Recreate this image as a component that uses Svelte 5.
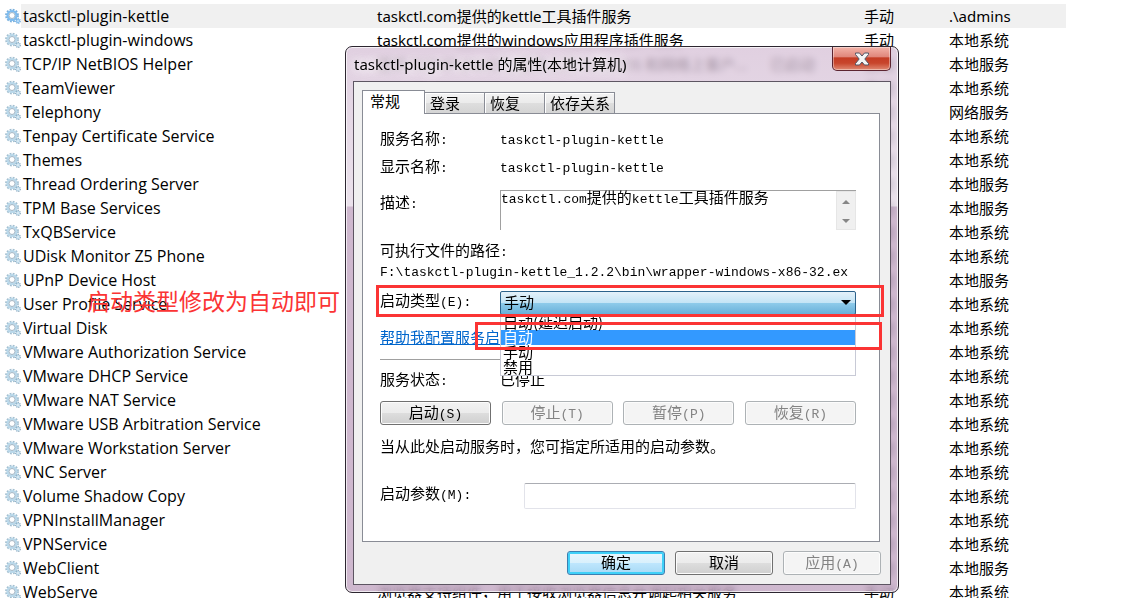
<script>
    const services = [
        { name: 'taskctl-plugin-kettle', desc: 'taskctl.com提供的kettle工具插件服务', start: '手动', login: '.\\admins' },
        { name: 'taskctl-plugin-windows', desc: 'taskctl.com提供的windows应用程序插件服务', start: '手动', login: '本地系统' },
        { name: 'TCP/IP NetBIOS Helper', desc: '提供 TCP/IP (NetBT) 服务上的 NetBIOS 和网络上客户...', status: '已启动', start: '自动', login: '本地服务' },
        { name: 'TeamViewer', start: '手动', login: '本地系统' },
        { name: 'Telephony', start: '手动', login: '网络服务' },
        { name: 'Tenpay Certificate Service', start: '自动', login: '本地系统' },
        { name: 'Themes', start: '自动', login: '本地系统' },
        { name: 'Thread Ordering Server', start: '手动', login: '本地服务' },
        { name: 'TPM Base Services', start: '手动', login: '本地服务' },
        { name: 'TxQBService', start: '自动', login: '本地系统' },
        { name: 'UDisk Monitor Z5 Phone', start: '自动', login: '本地系统' },
        { name: 'UPnP Device Host', start: '手动', login: '本地服务' },
        { name: 'User Profile Service', start: '自动', login: '本地系统' },
        { name: 'Virtual Disk', start: '手动', login: '本地系统' },
        { name: 'VMware Authorization Service', start: '自动', login: '本地系统' },
        { name: 'VMware DHCP Service', start: '自动', login: '本地系统' },
        { name: 'VMware NAT Service', start: '自动', login: '本地系统' },
        { name: 'VMware USB Arbitration Service', start: '自动', login: '本地系统' },
        { name: 'VMware Workstation Server', start: '自动', login: '本地系统' },
        { name: 'VNC Server', start: '自动', login: '本地系统' },
        { name: 'Volume Shadow Copy', start: '手动', login: '本地系统' },
        { name: 'VPNInstallManager', start: '自动', login: '本地系统' },
        { name: 'VPNService', start: '手动', login: '本地系统' },
        { name: 'WebClient', start: '手动', login: '本地服务' },
        { name: 'WebServe', desc: '浏览器支持组件，用于接收浏览器信息并调起相关服务', start: '手动', login: '本地系统' }
    ];

    const tabs = ['常规', '登录', '恢复', '依存关系'];
    const startTypes = ['自动(延迟启动)', '自动', '手动', '禁用'];
    const actions = [
        { label: '启动', key: 'S', enabled: true },
        { label: '停止', key: 'T', enabled: false },
        { label: '暂停', key: 'P', enabled: false },
        { label: '恢复', key: 'R', enabled: false }
    ];

    let startType = '手动';
    let hovered = '自动';
</script>

<div class="screen">
    <table class="services">
        <colgroup>
            <col class="c-name" />
            <col class="c-desc" />
            <col class="c-status" />
            <col class="c-start" />
            <col />
        </colgroup>
        <tbody>
            {#each services as s, i}
                <tr class:selected={i === 0}>
                    <td class="name">
                        <svg class="gear" viewBox="0 0 16 16" aria-hidden="true">
                            <circle class="teeth" cx="7" cy="7.500" r="5.900" />
                            <circle class="ring" cx="7" cy="7.500" r="4.400" />
                            <circle class="hole" cx="7" cy="7.500" r="3" />
                            <circle class="teeth small" cx="13" cy="13" r="2.200" />
                            <circle class="ring small" cx="13" cy="13" r="1.400" />
                        </svg>
                        <span>{s.name}</span>
                    </td>
                    <td>{s.desc ?? ''}</td>
                    <td>{s.status ?? ''}</td>
                    <td>{s.start}</td>
                    <td>{s.login}</td>
                </tr>
            {/each}
        </tbody>
    </table>

    <p class="note">启动类型修改为自动即可</p>

    <section class="dialog" aria-label="taskctl-plugin-kettle 的属性(本地计算机)">
        <header>
            <h1>taskctl-plugin-kettle 的属性(本地计算机)</h1>
            <button class="close" aria-label="关闭">
                <svg viewBox="0 0 16 14">
                    <path d="M1.500 1h4L8 4l2.500-3h4v1.500L10.800 7l3.700 4.500V13h-4L8 10l-2.500 3h-4v-1.500L5.200 7 1.500 2.500z" />
                </svg>
            </button>
        </header>

        <div class="client">
            <div class="tabs" role="tablist">
                {#each tabs as tab, i}
                    <button class="tab" class:active={i === 0} role="tab" aria-selected={i === 0}>{tab}</button>
                {/each}
            </div>

            <div class="panel">
                <div class="row">
                    <span class="label">服务名称<i>:</i></span>
                    <span class="mono">taskctl-plugin-kettle</span>
                </div>
                <div class="row">
                    <span class="label">显示名称<i>:</i></span>
                    <span class="mono">taskctl-plugin-kettle</span>
                </div>
                <div class="row desc">
                    <span class="label">描述<i>:</i></span>
                    <div class="descbox">
                        <p><span class="mono">taskctl.com</span>提供的<span class="mono">kettle</span>工具插件服务</p>
                        <div class="scroll">
                            <svg viewBox="0 0 8 4"><path d="M0 4L4 0l4 4z" /></svg>
                            <svg viewBox="0 0 8 4"><path d="M0 0h8L4 4z" /></svg>
                        </div>
                    </div>
                </div>
                <div class="line path-label">可执行文件的路径<i>:</i></div>
                <div class="line path mono">F:\taskctl-plugin-kettle_1.2.2\bin\wrapper-windows-x86-32.ex</div>

                <div class="row start">
                    <label class="label" for="start-type">启动类型<i>(E):</i></label>
                    <div class="combo">
                        <select id="start-type" bind:value={startType}>
                            {#each startTypes as type}
                                <option>{type}</option>
                            {/each}
                        </select>
                        <svg class="arrow" viewBox="0 0 10 5"><path d="M0 0h10L5 5z" /></svg>
                        <ul class="menu" role="listbox" aria-label="启动类型">
                            {#each startTypes as type}
                                <li role="option" aria-selected={type === hovered} class:hovered={type === hovered}>{type}</li>
                            {/each}
                        </ul>
                        <div class="mark option-mark"></div>
                    </div>
                    <div class="mark row-mark"></div>
                </div>

                <div class="line help"><a href="#help">帮助我配置服务启</a></div>
                <hr />
                <div class="row status">
                    <span class="label">服务状态<i>:</i></span>
                    <span>已停止</span>
                </div>
                <div class="actions">
                    {#each actions as a}
                        <button class="btn" disabled={!a.enabled}>{a.label}<i>({a.key})</i></button>
                    {/each}
                </div>
                <div class="line hint">当从此处启动服务时，您可指定所适用的启动参数。</div>
                <div class="row params">
                    <label class="label" for="params">启动参数<i>(M):</i></label>
                    <input id="params" type="text" />
                </div>
            </div>

            <footer>
                <button class="btn primary">确定</button>
                <button class="btn">取消</button>
                <button class="btn" disabled>应用<i>(A)</i></button>
            </footer>
        </div>
    </section>
</div>

<style>
    :global(body) {
        margin: 0;
        background: #fff;
    }

    .screen {
        position: relative;
        box-sizing: border-box;
        height: 100vh;
        padding: 4px 65px 0 0;
        overflow: hidden;
        font-family: "Noto Sans", "Noto Sans CJK SC", sans-serif;
        font-size: 15px;
        color: #000;
    }

    .services {
        width: 100%;
        table-layout: fixed;
        border-collapse: collapse;
    }

    .c-name { width: 377px; }
    .c-desc { width: 393px; }
    .c-status { width: 94px; }
    .c-start { width: 85px; }

    td {
        height: 24px;
        padding: 0;
        line-height: 24px;
        white-space: nowrap;
    }

    .selected td {
        background: #f0f0f0;
    }

    .selected .name {
        background: linear-gradient(to right, #fff 21px, #f0f0f0 21px);
    }

    .name {
        padding-left: 5px;
        font-family: "Open Sans", sans-serif;
        font-size: 16px;
    }

    .name span {
        vertical-align: top;
    }

    .gear {
        width: 16px;
        height: 16px;
        margin: 4px 2px 0 0;
        vertical-align: top;
        float: left;
    }

    .teeth {
        fill: none;
        stroke: #a3bfd0;
        stroke-width: 2;
        stroke-dasharray: 1.8 1.29;
    }

    .ring {
        fill: none;
        stroke: #b9d8ea;
        stroke-width: 2.2;
    }

    .hole {
        fill: #fff;
        stroke: #8ba3b5;
        stroke-width: 0.8;
    }

    .teeth.small {
        stroke: #7fa2b9;
        stroke-width: 1.4;
        stroke-dasharray: 1.1 0.7;
    }

    .ring.small {
        stroke-width: 1.2;
    }

    .selected .ring {
        stroke: #7dbcf0;
    }

    .selected .teeth {
        stroke: #79afdb;
    }

    .note {
        position: absolute;
        left: 87px;
        top: 285px;
        margin: 0;
        font-size: 23px;
        line-height: 32px;
        color: #fb3434;
    }

    .dialog {
        position: absolute;
        left: 345px;
        top: 46px;
        box-sizing: border-box;
        width: 554px;
        padding: 0 7px 7px;
        border: 1px solid #2c2630;
        border-radius: 7px;
        background: linear-gradient(to bottom, rgba(214, 192, 214, 0.75), rgba(228, 216, 229, 0.75) 159px, rgba(190, 160, 190, 0.75) 160px);
        box-shadow: inset 0 0 0 1px rgba(255, 255, 255, 0.7);
        backdrop-filter: blur(3px);
    }

    header {
        display: flex;
        align-items: flex-start;
        justify-content: space-between;
        height: 34px;
    }

    h1 {
        margin: 0;
        padding-left: 1px;
        font-size: 15px;
        font-weight: normal;
        line-height: 34px;
        text-shadow: 0 0 8px #fff, 0 0 12px #fff;
    }

    .close {
        display: flex;
        align-items: center;
        justify-content: center;
        width: 59px;
        height: 24px;
        padding: 0;
        border: 1px solid #5c2430;
        border-top: 0;
        border-radius: 0 0 5px 5px;
        background: linear-gradient(#f3b3a9, #df8478 45%, #c43c24 46%, #c8452c 70%, #e08a74);
        box-shadow: inset 0 0 0 1px rgba(255, 255, 255, 0.4);
    }

    .close svg {
        width: 16px;
        height: 14px;
        fill: #f4f4f4;
        stroke: #535666;
    }

    .client {
        padding: 8px 10px 9px 8px;
        border: 1px solid #5d5562;
        background: #f0f0f0;
        font-family: "Liberation Mono", "Noto Sans CJK SC", monospace;
    }

    .client i,
    .mono {
        font-family: "Liberation Mono", "Noto Sans CJK SC", monospace;
        font-size: 13px;
        font-style: normal;
    }

    .tabs {
        display: flex;
        align-items: flex-end;
        height: 23px;
    }

    .tab {
        box-sizing: border-box;
        width: 60px;
        height: 21px;
        padding: 0 0 1px 5px;
        border: 1px solid #898c95;
        border-left-width: 0;
        border-bottom: 0;
        background: linear-gradient(#f3f3f3, #ebebeb 50%, #dedede 51%, #d4d4d4);
        box-shadow: inset 1px 1px 0 #fff;
        font: 15px/18px "Noto Sans CJK SC", sans-serif;
        text-align: left;
    }

    .tab:last-child {
        width: 70px;
    }

    .tab.active {
        position: relative;
        width: 63px;
        height: 24px;
        margin-bottom: -1px;
        padding: 0 0 3px 7px;
        border-left-width: 1px;
        background: #fff;
    }

    .panel {
        padding: 13px 23px 32px 17px;
        border: 1px solid #898c95;
        background: #fff;
    }

    .row {
        display: flex;
        align-items: center;
        height: 28px;
        line-height: 20px;
    }

    .label {
        flex: 0 0 120px;
    }

    .line {
        height: 20px;
        line-height: 20px;
        white-space: nowrap;
    }

    .desc {
        align-items: flex-start;
        height: 40px;
        margin-top: 7px;
    }

    .desc .label {
        line-height: 30px;
    }

    .descbox {
        display: flex;
        flex: 1;
        height: 39px;
        justify-content: space-between;
        border-top: 1px solid #a0a0a0;
        border-left: 1px solid #a0a0a0;
    }

    .descbox p {
        margin: 0;
        line-height: 18px;
    }

    .scroll {
        display: flex;
        flex-direction: column;
        align-items: center;
        justify-content: space-between;
        box-sizing: border-box;
        width: 20px;
        padding: 8px 0 6px;
        border: 1px solid #e6e6e6;
        background: #f0f0f0;
    }

    .scroll svg {
        width: 8px;
        height: 4px;
        fill: #868686;
    }

    .path-label {
        margin-top: 13px;
    }

    .path {
        overflow: hidden;
    }

    .start {
        position: relative;
        height: 24px;
        margin-top: 8px;
    }

    .start .label {
        line-height: 24px;
    }

    .combo {
        position: relative;
        flex: 1;
        height: 24px;
    }

    select {
        display: block;
        width: 100%;
        height: 24px;
        padding: 0 3px 2px;
        border: 1px solid #2c628b;
        border-radius: 2px;
        appearance: none;
        background: linear-gradient(#e4f1fa, #c3e4f5 50%, #8ecbea 51%, #68b0d9);
        color: #000;
        font: 15px/20px "Noto Sans CJK SC", sans-serif;
    }

    .arrow {
        position: absolute;
        right: 5px;
        top: 9px;
        width: 10px;
        height: 5px;
    }

    .menu {
        position: absolute;
        z-index: 1;
        left: 0;
        right: 0;
        top: 24px;
        margin: 0;
        padding: 0;
        border: 1px solid #c8cad6;
        border-top: 0;
        background: #fff;
        list-style: none;
        font-family: "Noto Sans CJK SC", sans-serif;
    }

    .menu li {
        height: 15px;
        padding-left: 2px;
        line-height: 14px;
    }

    .menu .hovered {
        background: #39f;
        color: #fff;
    }

    .mark {
        position: absolute;
        z-index: 2;
        border: 3px solid #fb3434;
        pointer-events: none;
    }

    .row-mark {
        inset: -6px -28px -2px -4px;
    }

    .option-mark {
        left: -25px;
        right: -26px;
        top: 31px;
        height: 22px;
    }

    .help {
        margin-top: 15px;
    }

    a {
        color: #06c;
    }

    hr {
        margin: 9px 0 12px;
        border: 0;
        border-top: 1px solid #a0a0a0;
    }

    .status {
        height: 20px;
    }

    .actions {
        display: flex;
        justify-content: space-between;
        margin-top: 9px;
    }

    .btn {
        box-sizing: border-box;
        width: 111px;
        height: 24px;
        padding: 0 0 2px;
        border: 1px solid #707070;
        border-radius: 3px;
        background: linear-gradient(#f2f2f2, #ebebeb 50%, #ddd 51%, #cfcfcf);
        box-shadow: inset 0 0 0 1px #fcfcfc;
        color: #000;
        font: 15px/20px "Noto Sans CJK SC", sans-serif;
    }

    .btn:disabled {
        border-color: #adb2b5;
        background: #f4f4f4;
        color: #838383;
    }

    .btn.primary {
        border-color: #3c7fb1;
        background: linear-gradient(#eaf6fd, #d9f0fc 50%, #bee6fd 51%, #a7d9f5);
        box-shadow: inset 0 0 0 2px #3fd0f8;
    }

    .hint {
        margin-top: 14px;
    }

    .params {
        height: 26px;
        margin-top: 24px;
    }

    .params .label {
        flex-basis: 144px;
    }

    input {
        flex: 1;
        box-sizing: border-box;
        min-width: 0;
        height: 26px;
        border: 1px solid #e2e3ea;
        border-top-color: #abadb3;
        border-radius: 2px;
    }

    footer {
        display: flex;
        justify-content: flex-end;
        gap: 10px;
        margin: 9px -1px 0 0;
    }

    footer .btn {
        width: 98px;
    }
</style>
